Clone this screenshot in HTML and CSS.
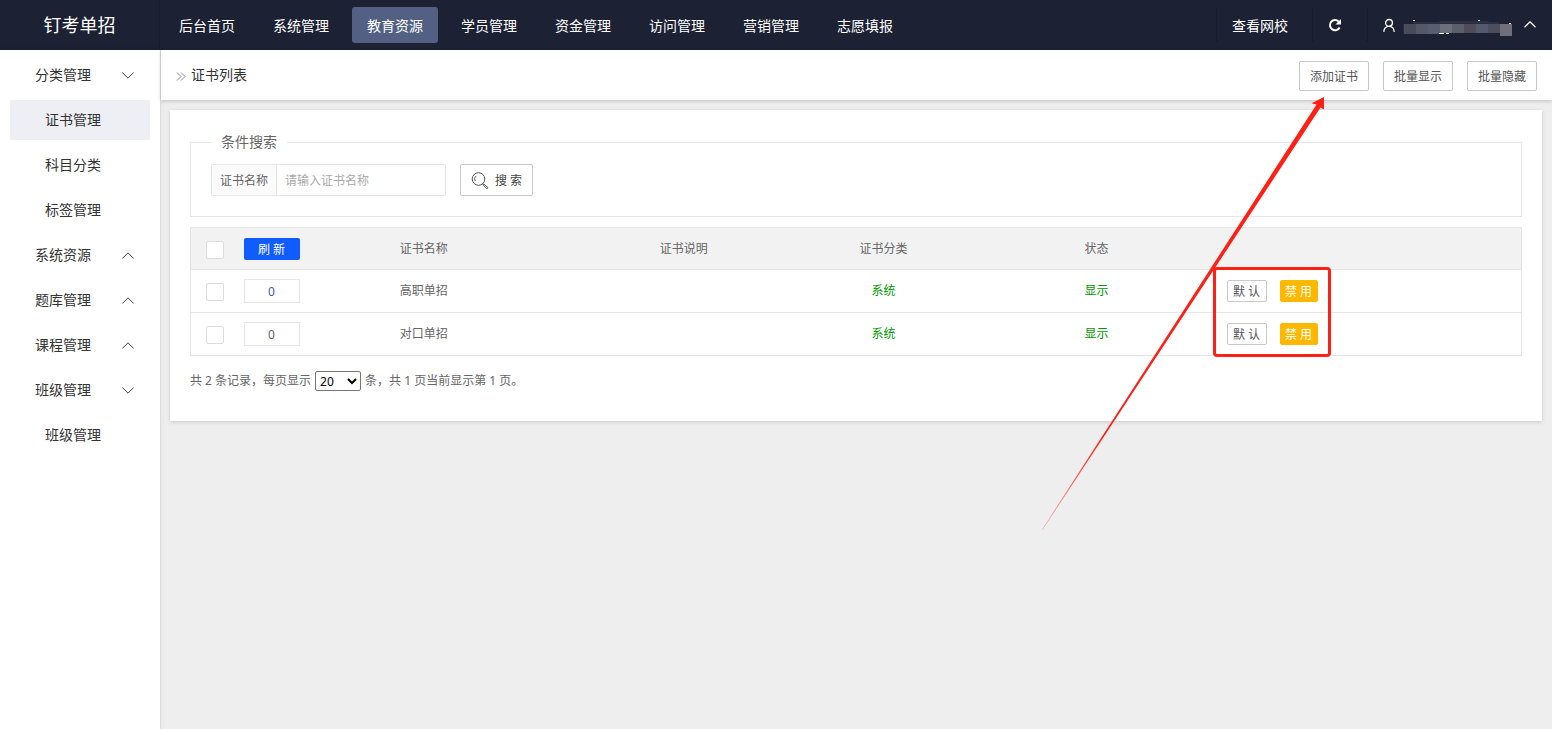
FILE: index.html
```html
<!DOCTYPE html>
<html lang="zh-CN">
<head>
<meta charset="utf-8">
<title>证书列表</title>
<link rel="stylesheet" href="styles.css">
</head>
<body>
<header class="topbar">
  <div class="brand">钉考单招</div>
  <nav class="mainnav">
    <a href="#">后台首页</a>
    <a href="#">系统管理</a>
    <a href="#" class="active">教育资源</a>
    <a href="#">学员管理</a>
    <a href="#">资金管理</a>
    <a href="#">访问管理</a>
    <a href="#">营销管理</a>
    <a href="#">志愿填报</a>
  </nav>
  <div class="tools">
    <a href="#" class="tool tool-site">查看网校</a>
    <button type="button" class="tool tool-refresh" aria-label="刷新页面">
      <svg width="14" height="14" viewBox="0 0 14 14" fill="none"><path d="M11.600 9.500A5.100 5.100 0 1 1 10.700 3.600" stroke="#fff" stroke-width="2"/><path d="M13 1V6.500H7.500z" fill="#fff"/></svg>
    </button>
    <button type="button" class="tool tool-user" aria-label="用户菜单">
      <svg width="12" height="14" viewBox="0 0 12 14" fill="none" stroke="#fff" stroke-width="1.300"><circle cx="6" cy="4.900" r="3.400"/><path d="M.8 13.900C1 10.500 3 8.300 6 8.300s5 2.200 5.200 5.600"/></svg>
      <svg class="username" width="110" height="22" viewBox="0 -4 110 22" shape-rendering="crispEdges">
        <path fill="#2b2e3f" d="M0 6h10V4h26V3h50v1h10v2h12v9H0z"/>
        <path fill="#494b58" d="M1 6h12v10H1z"/><path fill="#555866" d="M13 6h12v10H13z"/><path fill="#585e6e" d="M25 6h12v10H25z"/>
        <path fill="#6b6f79" d="M37 6h12v9H37z"/><path fill="#5b5f6c" d="M49 6h12v9H49z"/><path fill="#4e4c5b" d="M61 6h12v9H61z"/>
        <path fill="#545a6c" d="M73 6h12v9H73z"/><path fill="#4c4d5d" d="M85 6h12v9H85z"/><path fill="#6f6e7a" d="M97 6h12v12H97z"/>
        <path fill="#fff" d="M10 2h2v1h-2zM75 2h2v1h-2zM36 15h5v1h-5zM43 15h3v1h-3zM106 5h2v1h-2z"/>
      </svg>
      <svg width="12" height="9" viewBox="0 0 12 9" fill="none" stroke="#fff" stroke-width="1.300"><path d="M.5 6.300 6 .8l5.500 5.500"/></svg>
    </button>
  </div>
</header>
<div class="shell">
  <aside class="sidebar">
    <a href="#" class="group">分类管理<svg class="chev" viewBox="0 0 12 7"><path d="M.3.5 6 6.200 11.700.5"/></svg></a>
    <a href="#" class="sub current">证书管理</a>
    <a href="#" class="sub">科目分类</a>
    <a href="#" class="sub">标签管理</a>
    <a href="#" class="group">系统资源<svg class="chev" viewBox="0 0 12 7"><path d="M.3 6.500 6 .8l5.700 5.700"/></svg></a>
    <a href="#" class="group">题库管理<svg class="chev" viewBox="0 0 12 7"><path d="M.3 6.500 6 .8l5.700 5.700"/></svg></a>
    <a href="#" class="group">课程管理<svg class="chev" viewBox="0 0 12 7"><path d="M.3 6.500 6 .8l5.700 5.700"/></svg></a>
    <a href="#" class="group">班级管理<svg class="chev" viewBox="0 0 12 7"><path d="M.3.5 6 6.200 11.700.5"/></svg></a>
    <a href="#" class="sub">班级管理</a>
  </aside>
  <main class="content">
    <div class="pagehead">
      <svg width="10" height="9" viewBox="0 0 10 9" fill="none" stroke="#888"><path d="M1 .5l4 4-4 4M5 .5l4 4-4 4"/></svg>
      <h1>证书列表</h1>
      <div class="actions">
        <button type="button" class="btn">添加证书</button>
        <button type="button" class="btn">批量显示</button>
        <button type="button" class="btn">批量隐藏</button>
      </div>
    </div>
    <section class="card">
      <fieldset class="search">
        <legend>条件搜索</legend>
        <form class="searchrow">
          <div class="field">
            <label for="name">证书名称</label>
            <input id="name" type="text" placeholder="请输入证书名称">
          </div>
          <button type="button" class="btn btn-search">
            <svg width="18" height="18" viewBox="0 0 18 18" fill="none" stroke="#555"><circle cx="7.500" cy="7" r="6.300"/><path d="M4.300 9a3.800 3.800 0 0 1 .7-5"/><path d="M12 12l1 .2 4 3.600-1 1-3.800-3.800z"/></svg>
            搜 索
          </button>
        </form>
      </fieldset>
      <table class="list">
        <colgroup><col class="c-check"><col class="c-sort"><col class="c-name"><col class="c-desc"><col class="c-cat"><col class="c-state"><col></colgroup>
        <thead>
          <tr>
            <th><input type="checkbox" aria-label="全选"></th>
            <th><button type="button" class="btn-reload">刷 新</button></th>
            <th class="name">证书名称</th><th>证书说明</th><th>证书分类</th><th>状态</th><th></th>
          </tr>
        </thead>
        <tbody>
          <tr>
            <td><input type="checkbox" aria-label="选择高职单招"></td>
            <td><input class="sort sort-first" type="text" value="0" aria-label="高职单招排序"></td>
            <td class="name">高职单招</td><td></td><td class="ok">系统</td><td class="ok">显示</td>
            <td class="ops"><button type="button" class="mini">默 认</button><button type="button" class="mini mini-warn">禁 用</button></td>
          </tr>
          <tr>
            <td><input type="checkbox" aria-label="选择对口单招"></td>
            <td><input class="sort" type="text" value="0" aria-label="对口单招排序"></td>
            <td class="name">对口单招</td><td></td><td class="ok">系统</td><td class="ok">显示</td>
            <td class="ops"><button type="button" class="mini">默 认</button><button type="button" class="mini mini-warn">禁 用</button></td>
          </tr>
        </tbody>
      </table>
      <div class="pager">
        <label for="size">共 2 条记录，每页显示</label>
        <select id="size"><option>20</option><option>50</option></select>
        <span>条，共 1 页当前显示第 1 页。</span>
      </div>
    </section>
  </main>
</div>
<svg class="arrow" width="284" height="434" viewBox="0 0 284 434">
  <defs><linearGradient id="fade" gradientUnits="userSpaceOnUse" x1="0" y1="432" x2="60" y2="341"><stop offset="0" stop-color="#ff2015" stop-opacity=".3"/><stop offset="1" stop-color="#ff2015"/></linearGradient></defs>
  <path fill="url(#fade)" d="M1 432.500 275.500 7.500 270.500 6.300 283 0V12.500L279.500 10.500 1.800 432.500z"/>
</svg>
<div class="marker"></div>
</body>
</html>
```
FILE: styles.css
```css
* { box-sizing: border-box; }
body {
  margin: 0;
  min-height: 100vh;
  display: flex;
  flex-direction: column;
  position: relative;
  background: #eee;
  color: #666;
  font: 12px/20px "Noto Sans", "Noto Sans CJK SC", sans-serif;
}
a { color: inherit; text-decoration: none; }
button, input, select { font: inherit; color: inherit; margin: 0; }
button { cursor: pointer; white-space: nowrap; }
svg { flex: none; }

.topbar { display: flex; height: 50px; background: #1d2134; color: #fff; font-size: 14px; }
.brand { width: 160px; font-size: 18px; line-height: 50px; text-align: center; border-right: 1px solid #191c2b; }
.mainnav { display: flex; align-items: center; gap: 8px; padding: 0 4px; }
.mainnav a { padding: 2px 15px 0; line-height: 34px; border-radius: 3px; white-space: nowrap; }
.mainnav .active { background: #536083; }
.tools { display: flex; align-items: center; margin-left: auto; }
.tool {
  display: flex;
  align-items: center;
  height: 34px;
  padding: 0;
  border: 0;
  border-left: 1px solid #171a29;
  background: none;
  color: #fff;
}
.tool-site { padding: 2px 24px 0 15px; }
.tool-refresh { padding: 0 25px 0 15px; }
.tool-user { padding: 0 16px 0 15px; gap: 8px; }
.tool-user svg:last-child { margin-left: 3px; }

.shell { display: flex; flex: 1; }
.sidebar {
  width: 161px;
  flex: none;
  display: flex;
  flex-direction: column;
  gap: 5px;
  padding: 5px 10px 20px;
  background: #fff;
  border-right: 1px solid #ddd;
  box-shadow: 0 0 6px rgba(0, 0, 0, .06);
  color: #333;
  font-size: 14px;
}
.sidebar a { display: flex; align-items: center; height: 40px; }
.group { padding: 0 16px 0 25px; justify-content: space-between; }
.sub { padding-left: 35px; }
.current { background: #eeeff4; }
.chev { width: 12px; height: 7px; fill: none; stroke: #444; }

.content { flex: 1; min-width: 0; }
.pagehead {
  display: flex;
  align-items: center;
  gap: 5px;
  height: 50px;
  padding: 2px 15px 0;
  background: #fff;
  box-shadow: 0 1px 4px rgba(0, 0, 0, .2);
}
.pagehead h1 { margin: 0; font-size: 14px; line-height: 22px; font-weight: 400; color: #333; padding-bottom: 2px; }
.actions { display: flex; gap: 14px; margin-left: auto; }
.btn {
  height: 30px;
  padding: 2px 10px 0;
  border: 1px solid #c9c9c9;
  border-radius: 2px;
  background: #fff;
  color: #555;
}
.card {
  margin: 10px 10px 20px 9px;
  padding: 22px 20px 30px;
  background: #fff;
  box-shadow: 0 1px 4px rgba(0, 0, 0, .16);
}

.search { margin: 0 0 10px; padding: 12px 20px 20px; border: 1px solid #e6e6e6; }
.search legend { padding: 0 10px; font-size: 14px; line-height: 20px; }
.searchrow { display: flex; gap: 14px; }
.field { display: flex; width: 235px; height: 32px; border: 1px solid #e6e6e6; border-radius: 2px; }
.field label { padding: 0 8px; line-height: 32px; background: #fbfbfb; border-right: 1px solid #e6e6e6; white-space: nowrap; }
.field input { flex: 1; min-width: 0; padding: 2px 8px 0; border: 0; background: #fff; }
.field input::placeholder { color: #aaa; opacity: 1; }
.btn-search { display: flex; align-items: center; gap: 6px; height: 32px; color: #444; }

.list { width: 100%; table-layout: fixed; border-collapse: collapse; border: 1px solid #e6e6e6; }
.c-check { width: 48px; }
.c-sort { width: 66px; }
.c-name { width: 21%; }
.c-desc { width: 15%; }
.c-cat { width: 15%; }
.c-state { width: 17%; }
.list th, .list td { height: 43px; padding: 0; font-weight: 400; text-align: center; vertical-align: middle; border-bottom: 1px solid #e6e6e6; }
.list th { height: 42px; }
.list thead { background: #f2f2f2; }
.list .name { padding-right: 41px; }
.list input[type="checkbox"] {
  appearance: none;
  display: block;
  width: 18px;
  height: 18px;
  margin: 2px auto 0;
  border: 1px solid #ddd;
  border-radius: 2px;
  background: #fff;
}
.btn-reload { display: block; width: 56px; height: 22px; margin: 0 auto; padding: 2px 0 0; border: 0; border-radius: 2px; background: #105cff; color: #fff; }
.sort { display: block; width: 56px; height: 24px; margin: 0 auto; padding: 0; border: 1px solid #e6e6e6; text-align: center; }
.sort-first { color: #3d5f94; }
.ok { color: #090; }
.list .ops { text-align: left; padding-left: 17px; }
.mini { height: 22px; width: 40px; padding: 2px 0 0; line-height: 18px; border: 1px solid #c9c9c9; border-radius: 2px; background: #fff; color: #555; vertical-align: middle; }
.mini-warn { width: 38px; margin-left: 13px; border-color: #ffb800; background: #ffb800; color: #fff; }

.pager { display: flex; align-items: center; gap: 4px; margin-top: 15px; }
.pager select { width: 46px; height: 20px; padding: 0; border: 1px solid #767676; border-radius: 2px; background: #fff; color: #000; }

.arrow { position: absolute; top: 97px; right: 227px; pointer-events: none; }
.marker {
  position: absolute;
  top: 267px;
  right: 221px;
  width: 118px;
  height: 90px;
  border: 3px solid #ff2015;
  border-radius: 4px;
  pointer-events: none;
}
```
